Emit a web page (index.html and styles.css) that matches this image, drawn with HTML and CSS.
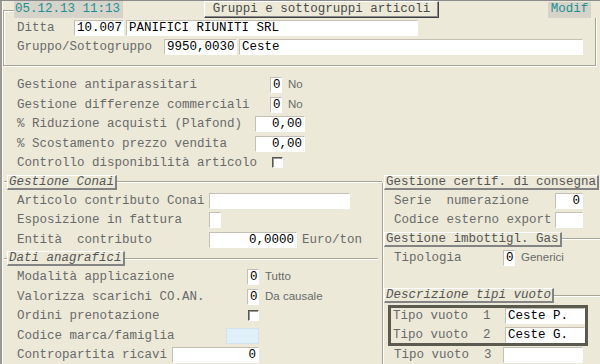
FILE: index.html
```html
<!DOCTYPE html>
<html lang="it">
<head>
  <meta charset="UTF-8">
  <title>Gruppi e sottogruppi articoli</title>
  <link rel="stylesheet" href="styles.css">
</head>
<body>

<div class="page">

  <div class="topbar">
    <span class="clock">05.12.13 11:13</span>
    <span class="wintitle">Gruppi e sottogruppi articoli</span>
    <span class="mode">Modif</span>
  </div>

  <div class="headbox">
    <div class="row">
      <span class="lbl w57">Ditta</span>
      <span class="fld w50">10.007</span>
      <span class="fld w292 next">PANIFICI RIUNITI SRL</span>
    </div>
    <div class="row">
      <span class="lbl w147">Gruppo/Sottogruppo</span>
      <span class="fld w73">9950,0030</span>
      <span class="fld w344 next">Ceste</span>
    </div>
  </div>

  <div class="general">
    <div class="row">
      <span class="lbl w253">Gestione antiparassitari</span>
      <span class="fld w12">0</span>
      <span class="sfx">No</span>
    </div>
    <div class="row">
      <span class="lbl w253">Gestione differenze commerciali</span>
      <span class="fld w12">0</span>
      <span class="sfx">No</span>
    </div>
    <div class="row">
      <span class="lbl w238">% Riduzione acquisti (Plafond)</span>
      <span class="fld w50 num">0,00</span>
    </div>
    <div class="row">
      <span class="lbl w238">% Scostamento prezzo vendita</span>
      <span class="fld w50 num">0,00</span>
    </div>
    <div class="row">
      <span class="lbl w255">Controllo disponibilità articolo</span>
      <span class="chk"></span>
    </div>
  </div>

  <div class="cols">
    <div class="left">
      <div class="gtitle">
        <span class="gline lead"></span>
        <span class="gt it">Gestione Conai</span>
        <span class="gline"></span>
      </div>
      <div class="rows">
        <div class="row">
          <span class="lbl w192">Articolo contributo Conai</span>
          <span class="fld w141"></span>
        </div>
        <div class="row">
          <span class="lbl w192">Esposizione in fattura</span>
          <span class="fld w12"></span>
        </div>
        <div class="row">
          <span class="lbl w192">Entità  contributo</span>
          <span class="fld w88 num">0,0000</span>
          <span class="unit">Euro/ton</span>
        </div>
      </div>

      <div class="gtitle">
        <span class="gline lead"></span>
        <span class="gt it">Dati anagrafici</span>
        <span class="gline short"></span>
      </div>
      <div class="rows">
        <div class="row">
          <span class="pair"><span class="lbl">Modalità applicazione</span><span class="fld w12">0</span></span>
          <span class="sfx">Tutto</span>
        </div>
        <div class="row">
          <span class="pair"><span class="lbl">Valorizza scarichi CO.AN.</span><span class="fld w12">0</span></span>
          <span class="sfx">Da causale</span>
        </div>
        <div class="row">
          <span class="pair"><span class="lbl">Ordini prenotazione</span><span class="chk"></span></span>
        </div>
        <div class="row">
          <span class="pair"><span class="lbl">Codice marca/famiglia</span><span class="fld w33 blue"></span></span>
        </div>
        <div class="row">
          <span class="pair"><span class="lbl">Contropartita ricavi</span><span class="fld w87 num">0</span></span>
        </div>
      </div>
    </div>

    <div class="right">
      <div class="gtitle">
        <span class="gt">Gestione certif. di consegna</span>
      </div>
      <div class="rows">
        <div class="row">
          <span class="lbl w161">Serie  numerazione</span>
          <span class="fld w28 num">0</span>
        </div>
        <div class="row">
          <span class="lbl w161">Codice esterno export</span>
          <span class="fld w28"></span>
        </div>
      </div>

      <div class="gtitle">
        <span class="gt">Gestione imbottigl. Gas</span>
        <span class="gline"></span>
      </div>
      <div class="rows">
        <div class="row">
          <span class="lbl w109">Tipologia</span>
          <span class="fld w12">0</span>
          <span class="sfx">Generici</span>
        </div>
      </div>

      <div class="gtitle spaced">
        <span class="gt it">Descrizione tipi vuoto</span>
        <span class="gline"></span>
      </div>
      <div class="vuoti">
        <div class="row">
          <span class="lbl w112">Tipo vuoto  1</span>
          <span class="fld w80">Ceste P.</span>
        </div>
        <div class="row">
          <span class="lbl w112">Tipo vuoto  2</span>
          <span class="fld w80">Ceste G.</span>
        </div>
      </div>
      <div class="rows last">
        <div class="row">
          <span class="lbl w109">Tipo vuoto  3</span>
          <span class="fld w80"></span>
        </div>
      </div>
    </div>
  </div>

</div>

</body>
</html>
```

FILE: styles.css
```css
body {
  margin: 0;
  background-color: #ece9d8;
  font-family: "Liberation Mono", "Courier New", monospace;
  font-size: 12.5px;
  color: #6a6a6a;
}
.page {
  width: 600px;
  height: 364px;
  overflow: hidden;
  box-sizing: border-box;
  border-top: 1px solid #8a8a8a;
  box-shadow: inset 2px 0 #9a9a92, inset 3px 0 #fff;
}

/* barra superiore */
.topbar {
  position: relative;
  z-index: 1;
  display: flex;
  align-items: flex-start;
  height: 17px;
  margin-left: 14px;
  background: #ece9d8;
}
.clock {
  width: 109px;
  height: 17px;
  padding-left: 1px;
  box-sizing: border-box;
  background: #d6d3cb;
  color: #1f8f8f;
  line-height: 16px;
}
.wintitle {
  margin-left: 81px;
  width: 235px;
  height: 17px;
  box-sizing: border-box;
  border: 1px solid;
  border-color: #fff #404040 #404040 #fff;
  box-shadow: inset -1px -1px #8a8a8a;
  text-align: center;
  line-height: 14px;
  color: #4a4a4a;
}
.mode {
  margin-left: auto;
  margin-right: 9px;
  margin-top: 1px;
  width: 43px;
  height: 16px;
  background: #d6d3cb;
  color: #1f8f8f;
  text-align: center;
  line-height: 15px;
}

.headbox {
  margin: -8px 4px 0 3px;
  padding: 9px 0 10px 13px;
  border: 1px solid #a6a596;
  box-shadow: inset 1px 1px #fff, 1px 1px #fff;
}
.headbox .row { height: 19px; }
.headbox .row:last-child { height: 16px; }

/* righe */
.row {
  display: flex;
  align-items: flex-start;
  height: 19.5px;
}
.lbl {
  flex: none;
  line-height: 16px;
  white-space: pre;
}
.fld {
  flex: none;
  height: 16px;
  box-sizing: border-box;
  padding: 0 2px;
  border: 1px solid;
  border-color: #c4c1b4 #fff #fff #c4c1b4;
  background: #fff;
  color: #000;
  line-height: 14px;
  white-space: pre;
  overflow: hidden;
}
.fld.num { text-align: right; }
.fld.blue { background: #e0f0f8; border-color: #d4e4ec; }
.fld.next { margin-left: 2px; }
.chk {
  flex: none;
  width: 11px;
  height: 11px;
  margin-top: 1.5px;
  box-sizing: border-box;
  border: 1px solid;
  border-color: #555 #fff #fff #555;
  box-shadow: inset 1px 1px #9a9a92;
  background: #fff;
}
.sfx {
  margin-left: 6px;
  font-family: "Liberation Sans", Tahoma, sans-serif;
  font-size: 11.5px;
  line-height: 15px;
  color: #6a6a6a;
}
.unit {
  margin-left: 5px;
  line-height: 16px;
}

.w12 { width: 12px; }
.w28 { width: 28px; }
.w33 { width: 33px; }
.w50 { width: 50px; }
.w57 { width: 57px; }
.w73 { width: 73px; }
.w80 { width: 80px; }
.w87 { width: 87px; }
.w88 { width: 88px; }
.w109 { width: 109px; }
.w112 { width: 112px; }
.w141 { width: 141px; }
.w147 { width: 147px; }
.w161 { width: 161px; }
.w192 { width: 192px; }
.w238 { width: 238px; }
.w253 { width: 253px; }
.w255 { width: 255px; }
.w292 { width: 292px; }
.w344 { width: 344px; }

.general {
  padding: 11px 0 0 17px;
}

/* gruppi */
.cols {
  display: grid;
  grid-template-columns: 382px 1fr;
}
.left {
  padding-left: 4px;
}
.right {
  padding-left: 2px;
  background:
    linear-gradient(#a6a596, #a6a596) 0 8px / 1px 100% no-repeat,
    linear-gradient(#fff, #fff) 1px 8px / 1px 100% no-repeat;
}
.gtitle {
  display: flex;
  align-items: center;
  height: 15px;
}
.gtitle.spaced { margin-top: 19px; }
.gt {
  flex: none;
  height: 15px;
  box-sizing: border-box;
  padding: 0 1px;
  border-style: solid;
  border-width: 1px 2px 2px 1px;
  border-color: #fff #848484 #848484 #fff;
  line-height: 12px;
  color: #555;
  white-space: pre;
}
.gt.it { font-style: italic; }
.gline {
  flex: 1;
  height: 0;
  border-top: 1px solid #a6a596;
  border-bottom: 1px solid #fff;
}
.gline.lead { flex: none; width: 3px; }
.gline.short { margin-right: 4px; }

.rows {
  padding: 3px 0 0 13px;
}
.right .rows { padding-left: 10px; }
.right .rows.last { padding-top: 1px; }

.pair {
  display: flex;
  justify-content: space-between;
  width: 242px;
}

.vuoti {
  margin: 2px 14px 0 4px;
  border: 3px solid #5a5a4e;
  padding-left: 2px;
}
.vuoti .row { height: 19px; }
.vuoti .row:last-child { height: 16px; }
```
